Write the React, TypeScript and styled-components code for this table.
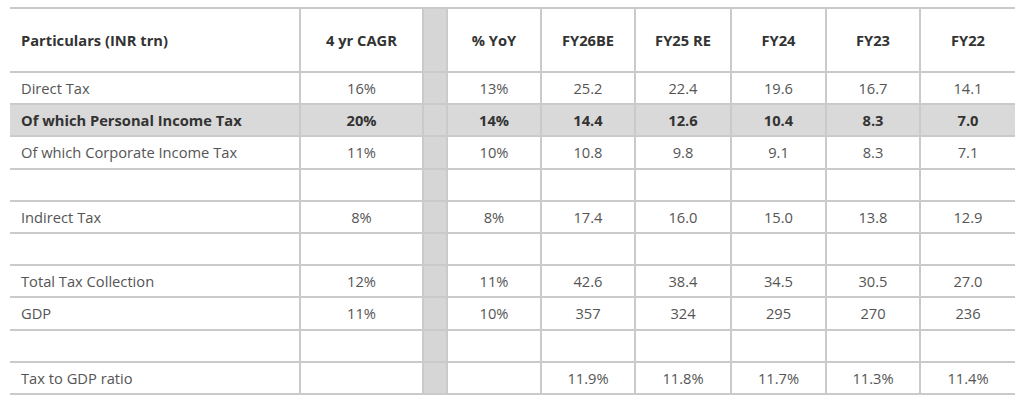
import React from "react";
import styled, { createGlobalStyle } from "styled-components";

const GlobalStyle = createGlobalStyle`
  html, body {
    margin: 0;
    padding: 0;
    background: #ffffff;
  }
  body {
    font-family: "Open Sans", "Noto Sans", "Liberation Sans", sans-serif;
  }
`;

const Wrapper = styled.div`
  width: 1024px;
  height: 402px;
  padding: 7px 9px 0 10px;
  box-sizing: border-box;
  background: #ffffff;
`;

const Table = styled.table`
  width: 1005px;
  table-layout: fixed;
  border-collapse: collapse;
  font-size: 14.7px;
  line-height: 20px;
  color: #555555;
`;

const Row = styled.tr<{ $highlight?: boolean }>`
  background: ${(p) => (p.$highlight ? "#d9d9d9" : "transparent")};
  font-weight: ${(p) => (p.$highlight ? 700 : 400)};
  color: ${(p) => (p.$highlight ? "#333333" : "#555555")};
`;

const HeadCell = styled.th<{ $left?: boolean }>`
  height: 62px;
  padding: 0 ${(p) => (p.$left ? "0 0 11px" : "0")};
  text-align: ${(p) => (p.$left ? "left" : "center")};
  font-weight: 700;
  font-size: 14.7px;
  color: #333333;
  border-top: 2px solid #cacaca;
  border-bottom: 2px solid #cacaca;
  border-left: 2px solid #cacaca;
  &:first-child {
    border-left: none;
  }
`;

const Cell = styled.td<{ $left?: boolean }>`
  height: 30.2px;
  padding: 0 ${(p) => (p.$left ? "0 0 11px" : "0")};
  text-align: ${(p) => (p.$left ? "left" : "center")};
  white-space: nowrap;
  border-bottom: 2px solid #cacaca;
  border-left: 2px solid #cacaca;
  &:first-child {
    border-left: none;
  }
`;

const Spacer = styled.td`
  background: #d6d6d6;
  border-bottom: 2px solid #cacaca;
  border-left: 2px solid #cacaca;
  padding: 0;
`;

const SpacerHead = styled.th`
  background: #d6d6d6;
  border-top: 2px solid #cacaca;
  border-bottom: 2px solid #cacaca;
  border-left: 2px solid #cacaca;
  padding: 0;
`;

const widths = [290, 123, 24, 94, 94, 96, 95, 94, 95];

type Line = {
  label: string;
  cagr?: string;
  yoy?: string;
  years?: string[];
  highlight?: boolean;
};

const lines: Line[] = [
  { label: "Direct Tax", cagr: "16%", yoy: "13%", years: ["25.2", "22.4", "19.6", "16.7", "14.1"] },
  {
    label: "Of which Personal Income Tax",
    cagr: "20%",
    yoy: "14%",
    years: ["14.4", "12.6", "10.4", "8.3", "7.0"],
    highlight: true,
  },
  { label: "Of which Corporate Income Tax", cagr: "11%", yoy: "10%", years: ["10.8", "9.8", "9.1", "8.3", "7.1"] },
  { label: "" },
  { label: "Indirect Tax", cagr: "8%", yoy: "8%", years: ["17.4", "16.0", "15.0", "13.8", "12.9"] },
  { label: "" },
  { label: "Total Tax Collection", cagr: "12%", yoy: "11%", years: ["42.6", "38.4", "34.5", "30.5", "27.0"] },
  { label: "GDP", cagr: "11%", yoy: "10%", years: ["357", "324", "295", "270", "236"] },
  { label: "" },
  { label: "Tax to GDP ratio", years: ["11.9%", "11.8%", "11.7%", "11.3%", "11.4%"] },
];

const yearHeads = ["FY26BE", "FY25 RE", "FY24", "FY23", "FY22"];

export default function App() {
  return (
    <>
      <GlobalStyle />
      <Wrapper>
        <Table>
          <colgroup>
            {widths.map((w, i) => (
              <col key={i} style={{ width: w }} />
            ))}
          </colgroup>
          <thead>
            <tr>
              <HeadCell $left>Particulars (INR trn)</HeadCell>
              <HeadCell>4 yr CAGR</HeadCell>
              <SpacerHead />
              <HeadCell>% YoY</HeadCell>
              {yearHeads.map((y) => (
                <HeadCell key={y}>{y}</HeadCell>
              ))}
            </tr>
          </thead>
          <tbody>
            {lines.map((l, i) => (
              <Row key={i} $highlight={l.highlight}>
                <Cell $left>{l.label}</Cell>
                <Cell>{l.cagr ?? ""}</Cell>
                <Spacer />
                <Cell>{l.yoy ?? ""}</Cell>
                {(l.years ?? ["", "", "", "", ""]).map((v, j) => (
                  <Cell key={j}>{v}</Cell>
                ))}
              </Row>
            ))}
          </tbody>
        </Table>
      </Wrapper>
    </>
  );
}
